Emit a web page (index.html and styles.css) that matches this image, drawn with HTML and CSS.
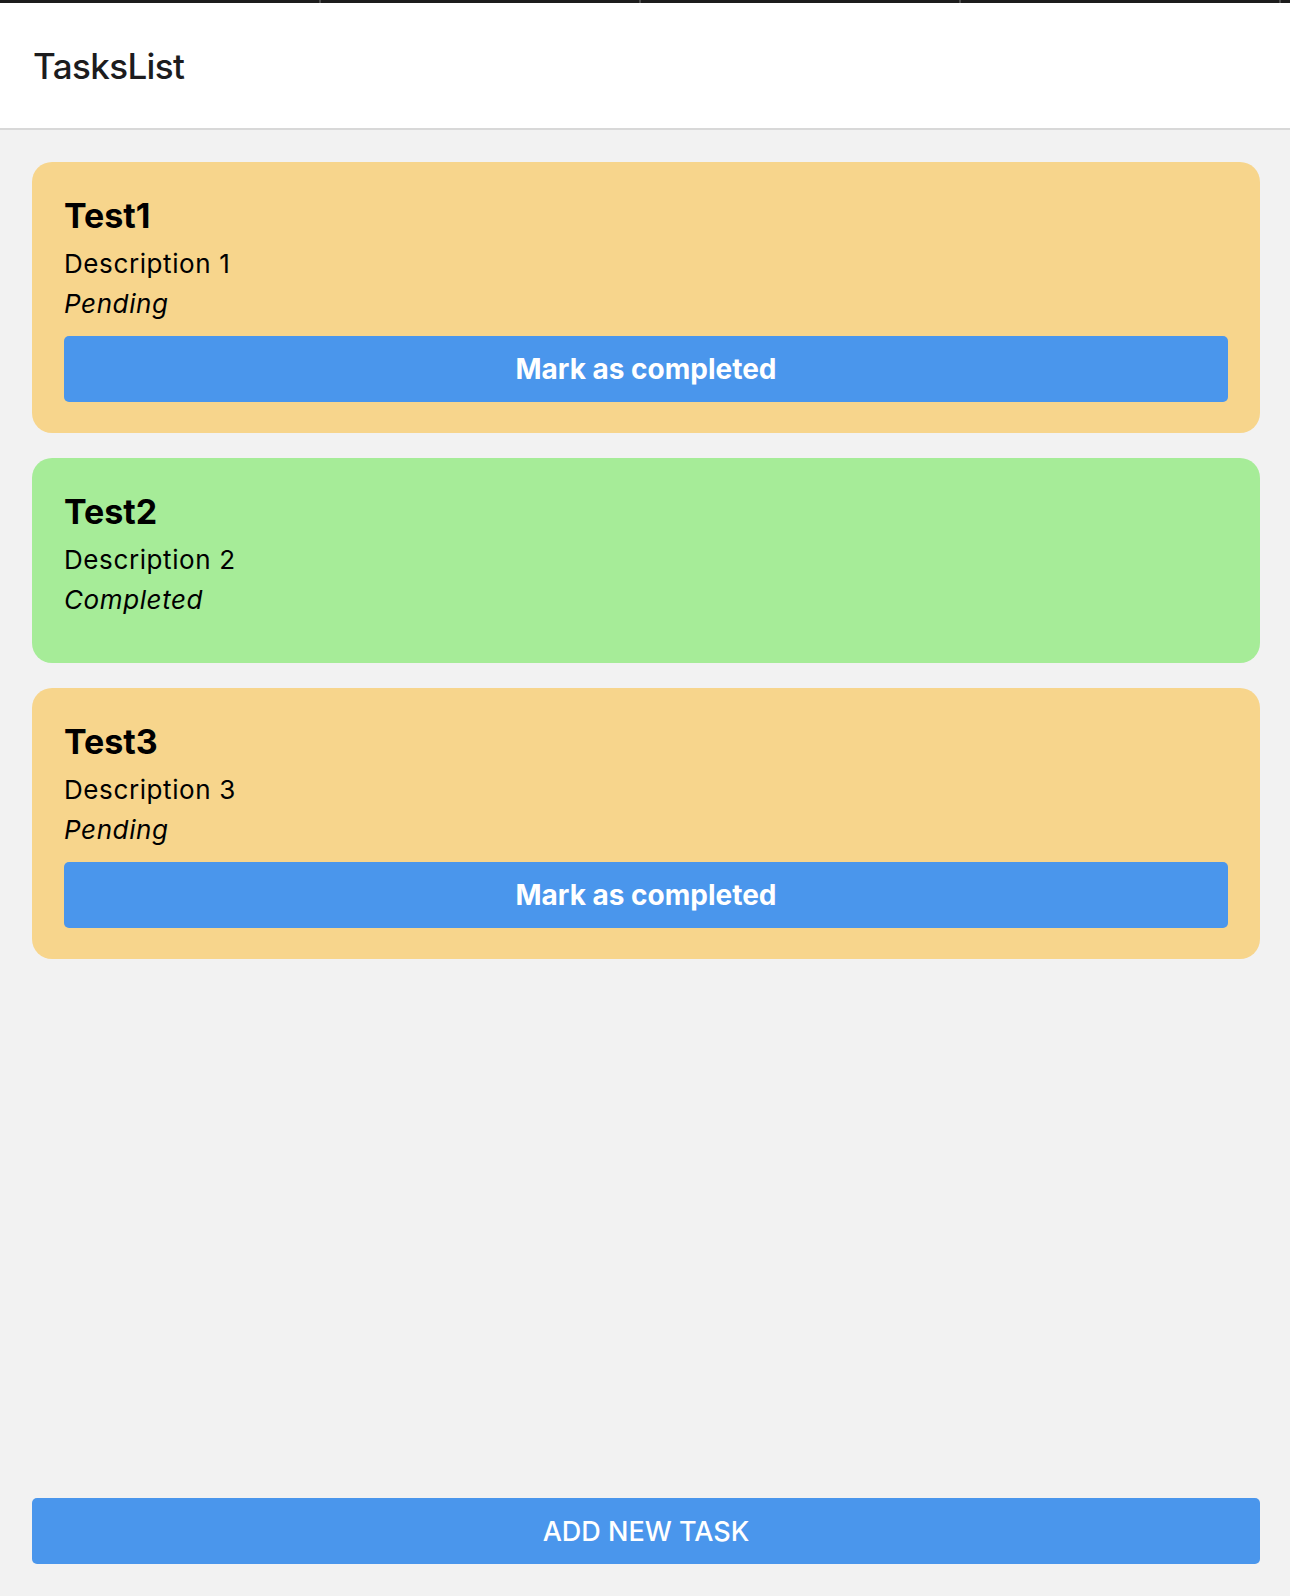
FILE: index.html
```html
<!DOCTYPE html>
<html lang="en">
<head>
<meta charset="utf-8">
<title>TasksList</title>
<link rel="stylesheet" href="styles.css">
</head>
<body>
<div class="app">
  <div class="topbar">
    <span class="tick"></span><span class="tick"></span><span class="tick"></span><span class="tick"></span>
  </div>
  <header class="header">
    <h1 class="header-title">TasksList</h1>
  </header>
  <main class="content">
    <ul class="task-list">
      <li class="task task-pending">
        <h2 class="task-title">Test1</h2>
        <p class="task-desc">Description 1</p>
        <p class="task-status">Pending</p>
        <button class="task-btn" type="button">Mark as completed</button>
      </li>
      <li class="task task-done">
        <h2 class="task-title">Test2</h2>
        <p class="task-desc">Description 2</p>
        <p class="task-status">Completed</p>
      </li>
      <li class="task task-pending">
        <h2 class="task-title">Test3</h2>
        <p class="task-desc">Description 3</p>
        <p class="task-status">Pending</p>
        <button class="task-btn" type="button">Mark as completed</button>
      </li>
    </ul>
    <button class="add-btn" type="button">ADD NEW TASK</button>
  </main>
</div>
</body>
</html>
```

FILE: styles.css
```css
* { box-sizing: border-box; }
html, body { margin: 0; padding: 0; }
body {
  background: #f2f2f2;
  font-family: Inter, "Liberation Sans", sans-serif;
  color: #000;
}
.app {
  min-height: 1596px;
  display: flex;
  flex-direction: column;
}
.topbar {
  height: 3px;
  background: #1d1d1d;
  display: flex;
  justify-content: flex-start;
  padding: 0 8px 0 319px;
}
.tick {
  width: 2px;
  height: 3px;
  background: #4a4a4a;
  margin-right: 318px;
}
.tick:last-child { margin-right: 0; }
.header {
  height: 127px;
  background: #fff;
  border-bottom: 2px solid #d8d8d8;
  display: flex;
  align-items: center;
  padding: 0 33px;
}
.header-title {
  margin: 0;
  font-size: 35px;
  line-height: 42px;
  font-weight: 500;
  color: #1c1c1e;
  letter-spacing: -0.6px;
}
.content {
  flex: 1;
  display: flex;
  flex-direction: column;
  padding: 32px 30px 32px 32px;
}
.task-list {
  list-style: none;
  margin: 0;
  padding: 0;
  flex: 1;
  display: flex;
  flex-direction: column;
  gap: 25px;
}
.task {
  border-radius: 20px;
  padding: 33px 32px 31px 32px;
  display: flex;
  flex-direction: column;
}
.task-pending { background: #f7d58c; }
.task-done { background: #a6ec98; }
.task-title {
  margin: 0 0 12px;
  font-size: 34px;
  line-height: 41px;
  font-weight: 700;
}
.task-desc {
  margin: 0 0 9px;
  font-size: 26px;
  line-height: 31px;
  font-weight: 400;
  letter-spacing: 0.6px;
}
.task-status {
  margin: 0 0 17px;
  font-size: 26px;
  line-height: 31px;
  font-style: italic;
  letter-spacing: 0.6px;
}
.task-btn, .add-btn {
  border: 0;
  background: #4a96ec;
  color: #fff;
  height: 66px;
  border-radius: 5px;
  font-family: Inter, "Liberation Sans", sans-serif;
  width: 100%;
  padding: 0;
}
.task-btn {
  font-size: 28px;
  font-weight: 700;
}
.add-btn {
  font-size: 27px;
  font-weight: 500;
  margin-top: 24px;
}
```
